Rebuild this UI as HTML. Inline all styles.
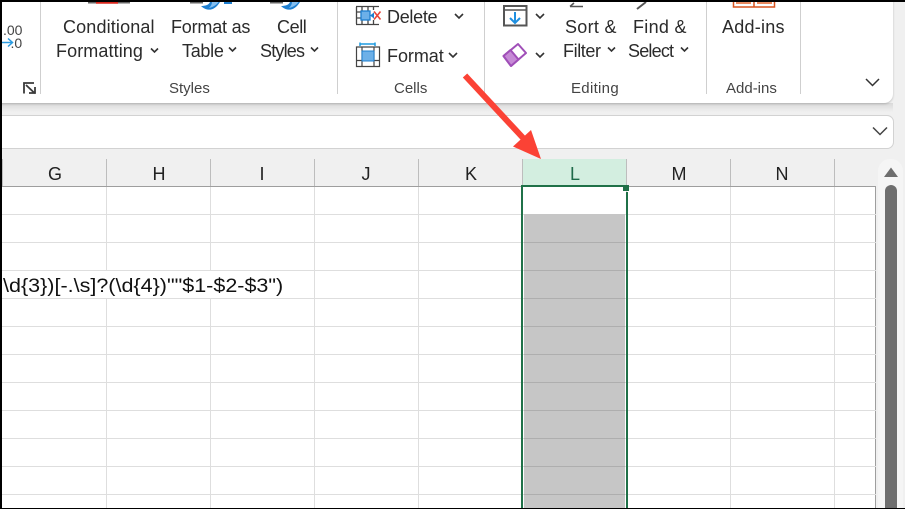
<!DOCTYPE html>
<html>
<head>
<meta charset="utf-8">
<style>
html,body{margin:0;padding:0;width:905px;height:509px;overflow:hidden;background:#000}
#p{position:absolute;left:0;top:0;width:905px;height:509px;overflow:hidden;background:#f0f0f0;font-family:"Liberation Sans",sans-serif}
.a{position:absolute}
.t{position:absolute;white-space:nowrap;color:#2b2b2b;font-size:18px;line-height:20px}
.g{position:absolute;white-space:nowrap;color:#444;font-size:15px;line-height:18px}
.h{position:absolute;top:163px;width:104px;text-align:center;color:#222;font-size:18px;line-height:22px}
.sep{position:absolute;width:1px;background:#cfcfcf}
.vl{position:absolute;top:187px;height:322px;width:1px;background:#dedede}
.hl{position:absolute;left:2px;width:874px;height:1px;background:#dedede}
.hs{position:absolute;top:159px;width:1px;height:27px;background:#bdbdbd}
.gl{position:absolute;left:524px;width:101px;height:1px;background:#aeaeae}
svg{position:absolute;left:0;top:0}
</style>
</head>
<body>
<div id="p">
  <!-- ribbon shadow + ribbon -->
  <div class="a" style="left:0;top:103px;width:905px;height:9px;background:linear-gradient(#d9d9d9,#f0f0f0)"></div>
  <div class="a" style="left:893px;top:90px;width:12px;height:22px;background:#f0f0f0"></div>
  <div class="a" style="left:0;top:0;width:893px;height:103px;background:#fff;border-bottom-right-radius:9px;box-shadow:0 1px 2px rgba(0,0,0,.2)"></div>
  <div class="sep" style="left:40px;top:2px;height:92px"></div>
  <div class="sep" style="left:337px;top:2px;height:92px"></div>
  <div class="sep" style="left:484px;top:2px;height:92px"></div>
  <div class="sep" style="left:706px;top:2px;height:92px"></div>
  <div class="sep" style="left:800px;top:2px;height:92px"></div>

  <div class="t" style="left:3px;top:22px;font-size:14px;line-height:16px;color:#444">.00</div>
  <div class="t" style="left:10.500px;top:35px;font-size:14px;line-height:16px;color:#444">.0</div>

  <div class="t" style="left:63px;top:17px;letter-spacing:.15px">Conditional</div>
  <div class="t" style="left:56px;top:41px;letter-spacing:.1px">Formatting</div>
  <div class="t" style="left:171px;top:17px;letter-spacing:-.2px">Format as</div>
  <div class="t" style="left:182px;top:41px;letter-spacing:-.3px">Table</div>
  <div class="t" style="left:277px;top:17px;letter-spacing:-.4px">Cell</div>
  <div class="t" style="left:260px;top:41px;letter-spacing:-.8px">Styles</div>
  <div class="t" style="left:387px;top:7px;letter-spacing:-.3px">Delete</div>
  <div class="t" style="left:387px;top:46px;letter-spacing:-.05px">Format</div>
  <div class="t" style="left:565px;top:17px;letter-spacing:.3px">Sort &amp;</div>
  <div class="t" style="left:563px;top:41px;letter-spacing:-.4px">Filter</div>
  <div class="t" style="left:633px;top:17px;letter-spacing:.3px">Find &amp;</div>
  <div class="t" style="left:628px;top:41px;letter-spacing:-.8px">Select</div>
  <div class="t" style="left:722px;top:17px;letter-spacing:.25px">Add-ins</div>

  <div class="g" style="left:169px;top:80px">Styles</div>
  <div class="g" style="left:394px;top:80px">Cells</div>
  <div class="g" style="left:571px;top:80px;letter-spacing:.3px">Editing</div>
  <div class="g" style="left:726px;top:80px">Add-ins</div>

  <!-- formula bar -->
  <div class="a" style="left:-8px;top:115px;width:900px;height:32px;background:#fff;border:1px solid #d2d2d2;border-radius:7px"></div>

  <!-- grid -->
  <div class="a" style="left:2px;top:187px;width:874px;height:322px;background:#fff"></div>
  <div class="a" style="left:2px;top:186px;width:874px;height:1px;background:#9e9e9e"></div>
  <div class="a" style="left:875px;top:186px;width:1px;height:323px;background:#9e9e9e"></div>

  <div class="hl" style="top:214px"></div><div class="hl" style="top:242px"></div><div class="hl" style="top:270px"></div>
  <div class="hl" style="top:298px"></div><div class="hl" style="top:326px"></div><div class="hl" style="top:354px"></div>
  <div class="hl" style="top:382px"></div><div class="hl" style="top:410px"></div><div class="hl" style="top:438px"></div>
  <div class="hl" style="top:466px"></div><div class="hl" style="top:494px"></div>

  <div class="vl" style="left:106px"></div><div class="vl" style="left:210px"></div><div class="vl" style="left:314px"></div>
  <div class="vl" style="left:418px"></div><div class="vl" style="left:522px"></div><div class="vl" style="left:626px"></div>
  <div class="vl" style="left:730px"></div><div class="vl" style="left:834px"></div>

  <div class="a" style="left:2px;top:271px;width:312px;height:27px;background:#fff"></div>

  <div class="hs" style="left:2px"></div><div class="hs" style="left:106px"></div><div class="hs" style="left:210px"></div>
  <div class="hs" style="left:314px"></div><div class="hs" style="left:418px"></div><div class="hs" style="left:522px"></div>
  <div class="hs" style="left:626px"></div><div class="hs" style="left:730px"></div><div class="hs" style="left:834px"></div>

  <div class="a" style="left:523px;top:159px;width:103px;height:27px;background:#d3eee0"></div>

  <div class="h" style="left:3px">G</div>
  <div class="h" style="left:107px">H</div>
  <div class="h" style="left:210px">I</div>
  <div class="h" style="left:314px">J</div>
  <div class="h" style="left:419px">K</div>
  <div class="h" style="left:523px;color:#1f6b4a">L</div>
  <div class="h" style="left:627px">M</div>
  <div class="h" style="left:730px">N</div>

  <div class="a" style="left:2px;top:270px;width:300px;height:28px;overflow:hidden">
    <div style="position:absolute;left:1px;top:6px;white-space:nowrap;font-size:19px;line-height:22px;color:#111;transform:scaleX(1.133);transform-origin:0 0">\d{3})[-.\s]?(\d{4})""$1-$2-$3")</div>
  </div>

  <!-- selection -->
  <div class="a" style="left:524px;top:214px;width:101px;height:295px;background:#c6c6c6"></div>
  <div class="gl" style="top:242px"></div><div class="gl" style="top:270px"></div><div class="gl" style="top:298px"></div>
  <div class="gl" style="top:326px"></div><div class="gl" style="top:354px"></div><div class="gl" style="top:382px"></div>
  <div class="gl" style="top:410px"></div><div class="gl" style="top:438px"></div><div class="gl" style="top:466px"></div><div class="gl" style="top:494px"></div>
  <div class="a" style="left:521px;top:185px;width:2px;height:324px;background:#1f7148"></div>
  <div class="a" style="left:626px;top:192px;width:2px;height:317px;background:#1f7148"></div>
  <div class="a" style="left:521px;top:185px;width:106px;height:2px;background:#1f7148"></div>
  <div class="a" style="left:623px;top:185px;width:6px;height:6px;background:#1f7148"></div>

  <!-- scrollbar -->
  <div class="a" style="left:876px;top:187px;width:29px;height:322px;background:#f0f0f0"></div>
  <div class="a" style="left:878px;top:159px;width:25px;height:350px;background:#f5f5f5;border-radius:12px 12px 0 0"></div>
  <div class="a" style="left:885px;top:185px;width:12px;height:324px;background:#6e6e6e;border-radius:6px 6px 0 0"></div>

  <svg width="905" height="509" viewBox="0 0 905 509" fill="none">
    <!-- scroll up -->
    <path d="M884 177L891 167.500L898 177Z" fill="#6e6e6e"/>
    <!-- formula chevron -->
    <path d="M873 127.500L880 134.500L887 127.500" stroke="#444" stroke-width="1.500"/>
    <!-- ribbon collapse -->
    <path d="M866 79L872.500 85.500L879 79" stroke="#333" stroke-width="1.500"/>

    <!-- small chevrons -->
    <g stroke="#333" stroke-width="1.600">
      <path d="M151 48.500L154.500 52L158 48.500"/>
      <path d="M229 47.500L232.500 51L236 47.500"/>
      <path d="M311 47.500L314.500 51L318 47.500"/>
      <path d="M455 14L459 18L463 14"/>
      <path d="M449 53L453 57L457 53"/>
      <path d="M536 14L540 18L544 14"/>
      <path d="M536 53L540 57L544 53"/>
      <path d="M608 47.500L611.500 51L615 47.500"/>
      <path d="M681 47.500L684.500 51L688 47.500"/>
    </g>

    <!-- top clipped icons -->
    <path d="M88 2.500H130" stroke="#666" stroke-width="2"/>
    <path d="M96 2.500H118" stroke="#d8261c" stroke-width="2.500"/>
    <path d="M190 2.500H203" stroke="#666" stroke-width="2"/>
    <path d="M201 6C206 11 214 12 220 2H210C209 5 205 6 201 6Z" fill="#1e7fd0"/>
    <path d="M209 8C213 7 216.500 5 218.500 2H212C212 4 211 6 209 8Z" fill="#85bff0"/>
    <path d="M224 3H232" stroke="#1e7fd0" stroke-width="2"/>
    <path d="M270 2.500H283" stroke="#666" stroke-width="2"/>
    <path d="M281 6C286 11 294 12 300 2H290C289 5 285 6 281 6Z" fill="#1e7fd0"/>
    <path d="M289 8C293 7 296.500 5 298.500 2H292C292 4 291 6 289 8Z" fill="#85bff0"/>
    <path d="M570 6.500H583M574 3L570 6.500" stroke="#555" stroke-width="1.500"/>
    <path d="M637 9L646 2" stroke="#555" stroke-width="2"/>
    <path d="M733.500 2V7H774.500V2" stroke="#d9531e" stroke-width="1.500"/>
    <path d="M754 2V7" stroke="#d9531e" stroke-width="1.500"/>
    <path d="M736 3H751M757 3H772" stroke="#e2642c" stroke-width="1.500"/>

    <!-- left fragment icons -->
    <path d="M2 42.500H12M8 38.500L12.500 42.500L8 46.500" stroke="#2b9be0" stroke-width="1.500"/>
    <path d="M34 83H24V93.500M26 85L35 93.500M29 93H35V87" stroke="#3a3a3a" stroke-width="1.800"/>

    <!-- delete icon -->
    <g stroke="#444" stroke-width="1.300">
      <path d="M356.500 7V24M373.500 7V10M373.500 20V24M356 6.500H379M356 24.500H379M362 7V24M368 7V24M356.500 12H361M356.500 18H361"/>
    </g>
    <rect x="361" y="11" width="9" height="9" fill="#6db0e8" stroke="#1e7fd0" stroke-width="1.300"/>
    <path d="M370 15.500L374 12.500V18.500Z" fill="#1e7fd0"/>
    <path d="M374 11.500L380.500 19.500M380.500 11.500L374 19.500" stroke="#e8453c" stroke-width="1.600"/>

    <!-- format icon -->
    <path d="M360 44H375M360 46V42.500M375 46V42.500" stroke="#1e9be0" stroke-width="1.500"/>
    <g stroke="#444" stroke-width="1.200">
      <path d="M356.500 47H379.500V66.500H356.500ZM362 47V66M374 47V66M356.500 60.500H379"/>
    </g>
    <rect x="362" y="51" width="12" height="10" fill="#6db0e8" stroke="#1e7fd0"/>

    <!-- fill icon -->
    <rect x="504" y="6" width="22.500" height="19.500" fill="#fff" stroke="#555" stroke-width="2"/>
    <path d="M504 10H526" stroke="#555" stroke-width="1.500"/>
    <path d="M515 12V23M510 18L515 23L520 18" stroke="#1e8fe0" stroke-width="2"/>

    <!-- eraser icon -->
    <path d="M518 44L526 53L511 66L503.500 56Z" fill="#fff" stroke="#a04fb8" stroke-width="2" stroke-linejoin="round"/>
    <path d="M503.500 56L510.500 50L518.500 59.500L511 66Z" fill="#c68ad6" stroke="#a04fb8" stroke-width="2" stroke-linejoin="round"/>

    <!-- arrow -->
    <path d="M465 75.500L525 140" stroke="#fb4235" stroke-width="6"/>
    <path d="M531 130L513 146.500L541 159Z" fill="#fb4235"/>
  </svg>

  <!-- black edges -->
  <div class="a" style="left:0;top:0;width:905px;height:2px;background:#000"></div>
  <div class="a" style="left:0;top:0;width:2px;height:509px;background:#000"></div>
  <div class="a" style="left:0;top:508px;width:905px;height:1px;background:#000"></div>
</div>
</body>
</html>
